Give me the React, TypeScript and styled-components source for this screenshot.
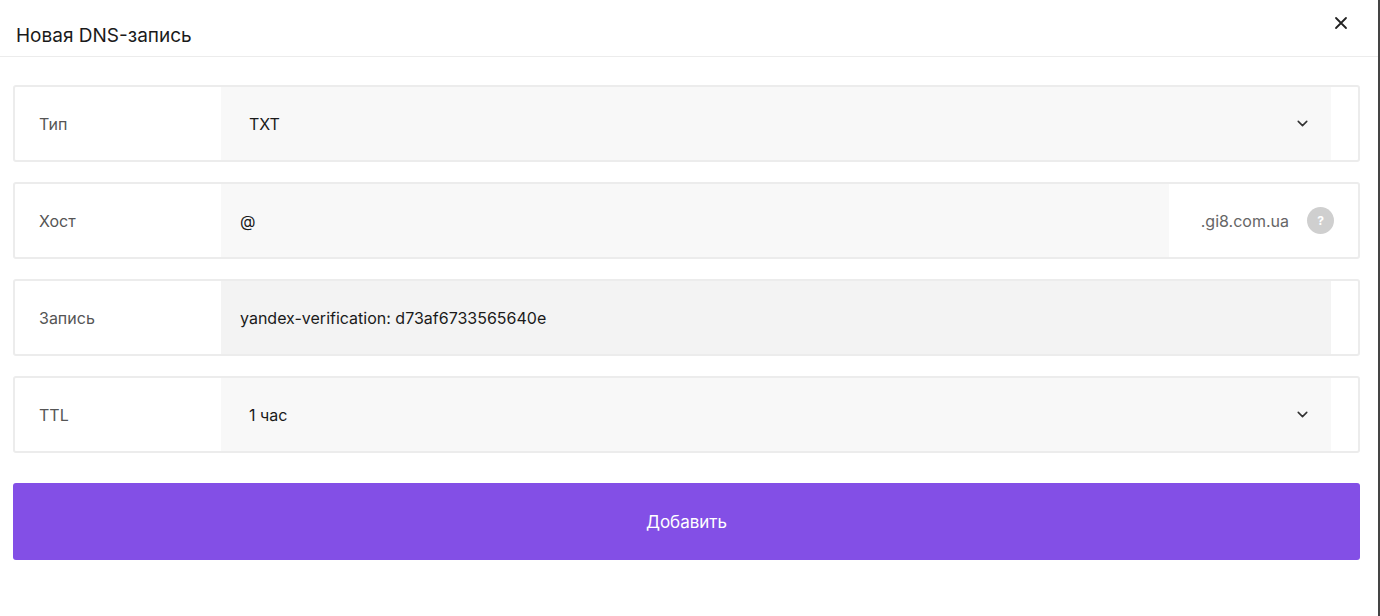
import React from 'react';
import styled, { createGlobalStyle } from 'styled-components';

const Global = createGlobalStyle`
  body { margin: 0; background: #fff; font-family: Inter, "Noto Sans", sans-serif; color: #1a1a1a; }
`;

const Modal = styled.div`
  width: 1378px;
  height: 616px;
  border-right: 2px solid #444;
  background: #fff;
`;

const Header = styled.div`
  height: 57px;
  border-bottom: 1px solid #ececec;
  display: flex;
  align-items: center;
  justify-content: space-between;
  padding: 14px 30px 0 16px;
  box-sizing: border-box;
`;

const Title = styled.div`
  font-size: 19px;
  color: #1a1a1a;
`;

const Close = styled.button`
  border: 0;
  background: none;
  padding: 0;
  margin-top: -24px;
  cursor: pointer;
  display: flex;
`;

const Body = styled.div`
  padding: 28px 18px 0 13px;
  display: flex;
  flex-direction: column;
  gap: 20px;
`;

const Row = styled.div`
  height: 77px;
  border: 2px solid #ececec;
  border-radius: 3px;
  display: flex;
  box-sizing: border-box;
  overflow: hidden;
`;

const Label = styled.div`
  width: 206px;
  flex-shrink: 0;
  display: flex;
  align-items: center;
  padding-left: 24px;
  box-sizing: border-box;
  font-size: 16px;
  color: #555;
`;

const Field = styled.div<{ $dark?: boolean; $indent?: number }>`
  flex: 1;
  display: flex;
  align-items: center;
  justify-content: space-between;
  background: ${p => (p.$dark ? '#f3f3f3' : '#f8f8f8')};
  padding-left: ${p => p.$indent ?? 28}px;
  padding-right: 20px;
  font-size: 16px;
  color: #1a1a1a;
`;

const Side = styled.div<{ $w: number }>`
  width: ${p => p.$w}px;
  flex-shrink: 0;
  display: flex;
  align-items: center;
  justify-content: flex-end;
  gap: 18px;
  padding-right: 24px;
  box-sizing: border-box;
  font-size: 16px;
  color: #666;
`;

const Help = styled.span`
  width: 27px;
  height: 27px;
  border-radius: 50%;
  background: #cfcfcf;
  color: #fff;
  font-size: 12px;
  font-weight: 700;
  display: flex;
  align-items: center;
  justify-content: center;
`;

const Submit = styled.button`
  margin-top: 10px;
  height: 77px;
  border: 0;
  border-radius: 3px;
  background: #834fe6;
  color: #fff;
  font-family: inherit;
  font-size: 17px;
  cursor: pointer;
`;

const Chevron = () => (
  <svg width="17" height="17" viewBox="0 0 24 24" fill="none" stroke="#333" strokeWidth="2.2" strokeLinecap="round" strokeLinejoin="round">
    <path d="M6 9l6 6 6-6" />
  </svg>
);

export default function App() {
  return (
    <Modal>
      <Global />
      <Header>
        <Title>Новая DNS-запись</Title>
        <Close aria-label="close">
          <svg width="14" height="14" viewBox="0 0 14 14" stroke="#222" strokeWidth="1.8" strokeLinecap="round">
            <path d="M2 2l10 10M12 2L2 12" />
          </svg>
        </Close>
      </Header>
      <Body>
        <Row>
          <Label>Тип</Label>
          <Field>TXT<Chevron /></Field>
          <Side $w={27} />
        </Row>
        <Row>
          <Label>Хост</Label>
          <Field $indent={19}>@</Field>
          <Side $w={189}>.gi8.com.ua<Help>?</Help></Side>
        </Row>
        <Row>
          <Label>Запись</Label>
          <Field $dark $indent={19}>yandex-verification: d73af6733565640e</Field>
          <Side $w={27} />
        </Row>
        <Row>
          <Label>TTL</Label>
          <Field>1 час<Chevron /></Field>
          <Side $w={27} />
        </Row>
        <Submit>Добавить</Submit>
      </Body>
    </Modal>
  );
}
